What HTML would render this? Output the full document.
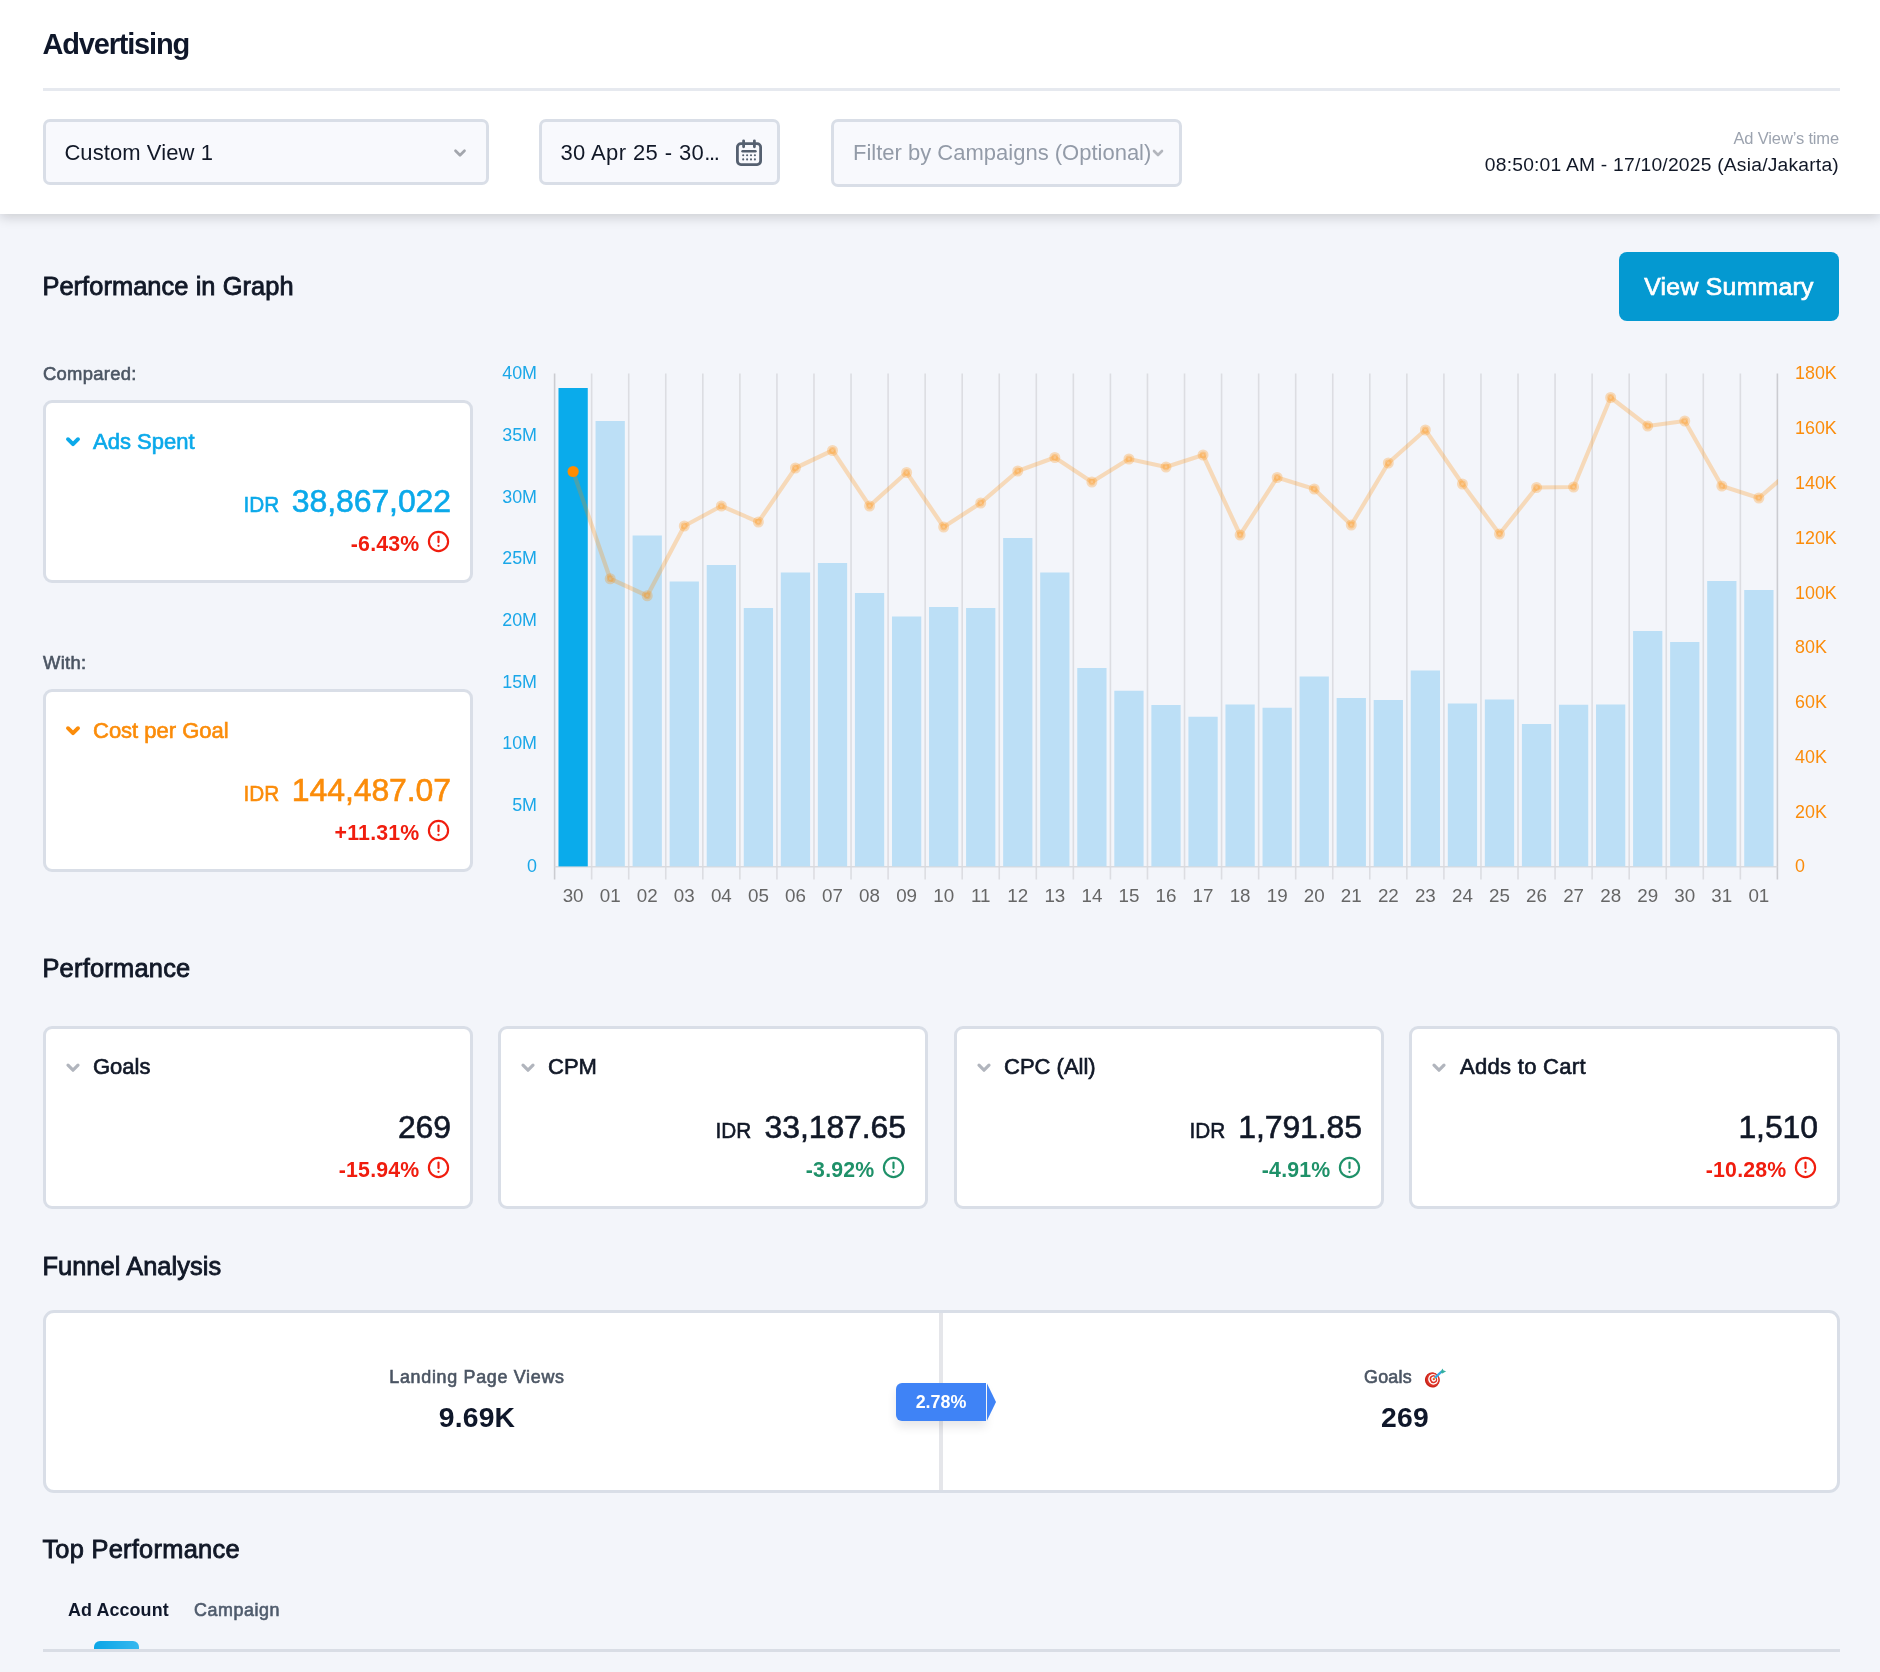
<!DOCTYPE html>
<html>
<head>
<meta charset="utf-8">
<title>Advertising</title>
<style>
*{box-sizing:border-box;margin:0;padding:0}
html,body{width:1880px;height:1672px;overflow:hidden}
body{background:#f3f5fa;font-family:"Liberation Sans",sans-serif;color:#111827;position:relative}
.abs{position:absolute;white-space:nowrap}
.hdr{position:absolute;left:0;top:0;width:1880px;height:214.4px;background:#fff;box-shadow:0 3.5px 11px rgba(10,10,20,.17)}
.title{left:42.6px;top:24.6px;font-size:29px;font-weight:700;line-height:38px;color:#0f172a;letter-spacing:-1.2px}
.hr{position:absolute;left:43px;top:88px;width:1797px;height:3px;background:#e6e9ef}
.inp{position:absolute;background:#f8f9fd;border:3px solid #d9dee7;border-radius:7px}
.inp .t{position:absolute;left:19px;top:1px;font-size:22px;line-height:60px;white-space:nowrap;color:#111827}
.sec{font-size:25.4px;line-height:34px;color:#111827;left:42.4px;-webkit-text-stroke:.85px #111827;letter-spacing:.07px;margin-top:-.4px}
.lbl{font-size:18.4px;line-height:24px;color:#4b5563;left:43px;-webkit-text-stroke:.6px #4b5563;letter-spacing:.3px;margin-top:.6px}
.card{position:absolute;background:#fff;border:3px solid #d9dee7;border-radius:9px;width:430px;height:183px}
.card .ct{position:absolute;left:47px;top:22.6px;font-size:22px;line-height:32px;white-space:nowrap;-webkit-text-stroke:.65px currentColor}
.card.p .ct{top:21.9px}
.card .chev{position:absolute;left:19px;top:33px}
.card .val{position:absolute;right:19px;top:74.4px;line-height:48px;white-space:nowrap;font-size:32px;letter-spacing:-.1px;-webkit-text-stroke:.6px currentColor}
.card .val small{display:inline-block;font-size:22.8px;margin-right:13px;letter-spacing:0;transform:scaleX(.91);transform-origin:100% 50%}
.card .pct{position:absolute;right:50.5px;top:126px;font-size:21.3px;font-weight:700;line-height:30px;white-space:nowrap;letter-spacing:.2px}
.card .ic{position:absolute;right:20px;top:127.2px}
.blue{color:#0ba9ea}
.org{color:#fb8c0a}
.red{color:#f01d0e}
.grn{color:#1f9169}
.chart{position:absolute;left:0;top:340px}
.al{font-size:17.9px;fill:#1aa7e8}
.ar{font-size:17.9px;fill:#fb8c0a}
.ax{font-size:18.8px;fill:#666}
svg text{font-family:"Liberation Sans",sans-serif}
</style>
</head>
<body>
<div id="root" style="position:absolute;left:0;top:0;width:1880px;height:1672px;will-change:transform">

<!-- header -->
<div class="hdr"></div>
<div class="abs title">Advertising</div>
<div class="hr"></div>

<div class="inp" style="left:43px;top:119px;width:446px;height:66px">
  <div class="t" style="left:18.4px;letter-spacing:.08px">Custom View 1</div>
  <svg style="position:absolute;left:406px;top:25px" width="16" height="12" viewBox="0 0 16 12"><path d="M3.5 3.7 L8 8.2 L12.5 3.7" fill="none" stroke="#a3a6ad" stroke-width="2.7" stroke-linecap="round" stroke-linejoin="round"/></svg>
</div>
<div class="inp" style="left:539px;top:119px;width:241px;height:66px">
  <div class="t" style="letter-spacing:.4px;left:18.4px">30 Apr 25 - 30<span style="letter-spacing:-1.3px">...</span></div>
  <svg style="position:absolute;left:193px;top:17px" width="28" height="28" viewBox="0 0 28 28" fill="none" stroke="#556070" stroke-width="2.8" stroke-linecap="round">
    <rect x="2.4" y="4.6" width="23.2" height="21" rx="3.5"/>
    <path d="M8.6 1.8v6M19.4 1.8v6"/>
    <path d="M7.5 12.2h13" stroke-width="2.4"/>
    <g stroke-width="2.1"><path d="M8.2 16.3h.01M12.1 16.3h.01M16 16.3h.01M19.9 16.3h.01M8.2 20.4h.01M12.1 20.4h.01M16 20.4h.01M19.9 20.4h.01"/></g>
  </svg>
</div>
<div class="inp" style="left:831px;top:119px;width:351px;height:68px">
  <div class="t" style="color:#939ba8;line-height:62px;top:.2px">Filter by Campaigns (Optional)</div>
  <svg style="position:absolute;left:315.5px;top:24.5px" width="16" height="12" viewBox="0 0 16 12"><path d="M4 4 L8 8 L12 4" fill="none" stroke="#b3b6bd" stroke-width="2.6" stroke-linecap="round" stroke-linejoin="round"/></svg>
</div>
<div class="abs" style="right:41px;top:127px;font-size:16.5px;line-height:22px;color:#9ca3af;letter-spacing:-.15px">Ad View’s time</div>
<div class="abs" style="right:41px;top:151.5px;font-size:19.25px;line-height:26px;color:#111827;letter-spacing:.22px">08:50:01 AM - 17/10/2025 (Asia/Jakarta)</div>

<!-- performance in graph -->
<div class="abs sec" style="top:269px">Performance in Graph</div>
<div class="abs" style="left:1619px;top:252px;width:220px;height:69px;background:#0499d1;border-radius:8px;color:#fff;font-size:24.75px;line-height:69px;text-align:center;-webkit-text-stroke:.7px #fff;letter-spacing:.3px">View Summary</div>

<div class="abs lbl" style="top:361px">Compared:</div>
<div class="card blue" style="left:43px;top:400px">
  <svg class="chev" width="16" height="12" viewBox="0 0 16 12"><path d="M3 3.2 L8 8.2 L13 3.2" fill="none" stroke="#0ba9ea" stroke-width="3.9" stroke-linecap="round" stroke-linejoin="round"/></svg>
  <div class="ct">Ads Spent</div>
  <div class="val"><small>IDR</small>38,867,022</div>
  <div class="pct red">-6.43%</div>
  <svg class="ic" width="23" height="23" viewBox="0 0 23 23" fill="none" stroke="#f01d0e" stroke-width="2.15" stroke-linecap="round"><circle cx="11.5" cy="11.5" r="9.6"/><path d="M11.5 6.6v5.5"/><path d="M11.5 15.8v.01" stroke-width="2.3"/></svg>
</div>
<div class="abs lbl" style="top:650px">With:</div>
<div class="card org" style="left:43px;top:689px">
  <svg class="chev" width="16" height="12" viewBox="0 0 16 12"><path d="M3 3.2 L8 8.2 L13 3.2" fill="none" stroke="#fb8c0a" stroke-width="3.9" stroke-linecap="round" stroke-linejoin="round"/></svg>
  <div class="ct">Cost per Goal</div>
  <div class="val"><small>IDR</small>144,487.07</div>
  <div class="pct red">+11.31%</div>
  <svg class="ic" width="23" height="23" viewBox="0 0 23 23" fill="none" stroke="#f01d0e" stroke-width="2.15" stroke-linecap="round"><circle cx="11.5" cy="11.5" r="9.6"/><path d="M11.5 6.6v5.5"/><path d="M11.5 15.8v.01" stroke-width="2.3"/></svg>
</div>

<svg class="chart" width="1880" height="600" viewBox="0 340 1880 600">
<defs><clipPath id="cp"><rect x="546.6" y="360" width="1231.4" height="520"/></clipPath></defs>
<line x1="554.60" y1="373.5" x2="554.60" y2="879.5" stroke="#cbccd1" stroke-width="1.6"/>
<line x1="591.65" y1="373.5" x2="591.65" y2="879.5" stroke="#dcdde2" stroke-width="1.6"/>
<line x1="628.71" y1="373.5" x2="628.71" y2="879.5" stroke="#dcdde2" stroke-width="1.6"/>
<line x1="665.76" y1="373.5" x2="665.76" y2="879.5" stroke="#dcdde2" stroke-width="1.6"/>
<line x1="702.82" y1="373.5" x2="702.82" y2="879.5" stroke="#dcdde2" stroke-width="1.6"/>
<line x1="739.87" y1="373.5" x2="739.87" y2="879.5" stroke="#dcdde2" stroke-width="1.6"/>
<line x1="776.93" y1="373.5" x2="776.93" y2="879.5" stroke="#dcdde2" stroke-width="1.6"/>
<line x1="813.98" y1="373.5" x2="813.98" y2="879.5" stroke="#dcdde2" stroke-width="1.6"/>
<line x1="851.04" y1="373.5" x2="851.04" y2="879.5" stroke="#dcdde2" stroke-width="1.6"/>
<line x1="888.09" y1="373.5" x2="888.09" y2="879.5" stroke="#dcdde2" stroke-width="1.6"/>
<line x1="925.15" y1="373.5" x2="925.15" y2="879.5" stroke="#dcdde2" stroke-width="1.6"/>
<line x1="962.20" y1="373.5" x2="962.20" y2="879.5" stroke="#dcdde2" stroke-width="1.6"/>
<line x1="999.25" y1="373.5" x2="999.25" y2="879.5" stroke="#dcdde2" stroke-width="1.6"/>
<line x1="1036.31" y1="373.5" x2="1036.31" y2="879.5" stroke="#dcdde2" stroke-width="1.6"/>
<line x1="1073.36" y1="373.5" x2="1073.36" y2="879.5" stroke="#dcdde2" stroke-width="1.6"/>
<line x1="1110.42" y1="373.5" x2="1110.42" y2="879.5" stroke="#dcdde2" stroke-width="1.6"/>
<line x1="1147.47" y1="373.5" x2="1147.47" y2="879.5" stroke="#dcdde2" stroke-width="1.6"/>
<line x1="1184.53" y1="373.5" x2="1184.53" y2="879.5" stroke="#dcdde2" stroke-width="1.6"/>
<line x1="1221.58" y1="373.5" x2="1221.58" y2="879.5" stroke="#dcdde2" stroke-width="1.6"/>
<line x1="1258.64" y1="373.5" x2="1258.64" y2="879.5" stroke="#dcdde2" stroke-width="1.6"/>
<line x1="1295.69" y1="373.5" x2="1295.69" y2="879.5" stroke="#dcdde2" stroke-width="1.6"/>
<line x1="1332.75" y1="373.5" x2="1332.75" y2="879.5" stroke="#dcdde2" stroke-width="1.6"/>
<line x1="1369.80" y1="373.5" x2="1369.80" y2="879.5" stroke="#dcdde2" stroke-width="1.6"/>
<line x1="1406.85" y1="373.5" x2="1406.85" y2="879.5" stroke="#dcdde2" stroke-width="1.6"/>
<line x1="1443.91" y1="373.5" x2="1443.91" y2="879.5" stroke="#dcdde2" stroke-width="1.6"/>
<line x1="1480.96" y1="373.5" x2="1480.96" y2="879.5" stroke="#dcdde2" stroke-width="1.6"/>
<line x1="1518.02" y1="373.5" x2="1518.02" y2="879.5" stroke="#dcdde2" stroke-width="1.6"/>
<line x1="1555.07" y1="373.5" x2="1555.07" y2="879.5" stroke="#dcdde2" stroke-width="1.6"/>
<line x1="1592.13" y1="373.5" x2="1592.13" y2="879.5" stroke="#dcdde2" stroke-width="1.6"/>
<line x1="1629.18" y1="373.5" x2="1629.18" y2="879.5" stroke="#dcdde2" stroke-width="1.6"/>
<line x1="1666.24" y1="373.5" x2="1666.24" y2="879.5" stroke="#dcdde2" stroke-width="1.6"/>
<line x1="1703.29" y1="373.5" x2="1703.29" y2="879.5" stroke="#dcdde2" stroke-width="1.6"/>
<line x1="1740.35" y1="373.5" x2="1740.35" y2="879.5" stroke="#dcdde2" stroke-width="1.6"/>
<line x1="1777.40" y1="373.5" x2="1777.40" y2="879.5" stroke="#cbccd1" stroke-width="1.6"/>
<line x1="554.6" y1="866.7" x2="1777.4" y2="866.7" stroke="#d9dade" stroke-width="1.5"/>
<rect x="558.49" y="388.00" width="29.27" height="478.40" fill="#0aabeb"/>
<rect x="595.55" y="421.00" width="29.27" height="445.40" fill="#bcdff6"/>
<rect x="632.60" y="535.50" width="29.27" height="330.90" fill="#bcdff6"/>
<rect x="669.65" y="581.50" width="29.27" height="284.90" fill="#bcdff6"/>
<rect x="706.71" y="565.00" width="29.27" height="301.40" fill="#bcdff6"/>
<rect x="743.76" y="608.00" width="29.27" height="258.40" fill="#bcdff6"/>
<rect x="780.82" y="572.50" width="29.27" height="293.90" fill="#bcdff6"/>
<rect x="817.87" y="563.00" width="29.27" height="303.40" fill="#bcdff6"/>
<rect x="854.93" y="593.00" width="29.27" height="273.40" fill="#bcdff6"/>
<rect x="891.98" y="616.50" width="29.27" height="249.90" fill="#bcdff6"/>
<rect x="929.04" y="607.00" width="29.27" height="259.40" fill="#bcdff6"/>
<rect x="966.09" y="608.00" width="29.27" height="258.40" fill="#bcdff6"/>
<rect x="1003.15" y="538.00" width="29.27" height="328.40" fill="#bcdff6"/>
<rect x="1040.20" y="572.50" width="29.27" height="293.90" fill="#bcdff6"/>
<rect x="1077.25" y="668.00" width="29.27" height="198.40" fill="#bcdff6"/>
<rect x="1114.31" y="690.75" width="29.27" height="175.65" fill="#bcdff6"/>
<rect x="1151.36" y="705.00" width="29.27" height="161.40" fill="#bcdff6"/>
<rect x="1188.42" y="716.75" width="29.27" height="149.65" fill="#bcdff6"/>
<rect x="1225.47" y="704.50" width="29.27" height="161.90" fill="#bcdff6"/>
<rect x="1262.53" y="707.75" width="29.27" height="158.65" fill="#bcdff6"/>
<rect x="1299.58" y="676.50" width="29.27" height="189.90" fill="#bcdff6"/>
<rect x="1336.64" y="698.00" width="29.27" height="168.40" fill="#bcdff6"/>
<rect x="1373.69" y="700.00" width="29.27" height="166.40" fill="#bcdff6"/>
<rect x="1410.75" y="670.50" width="29.27" height="195.90" fill="#bcdff6"/>
<rect x="1447.80" y="703.50" width="29.27" height="162.90" fill="#bcdff6"/>
<rect x="1484.85" y="699.50" width="29.27" height="166.90" fill="#bcdff6"/>
<rect x="1521.91" y="724.00" width="29.27" height="142.40" fill="#bcdff6"/>
<rect x="1558.96" y="704.75" width="29.27" height="161.65" fill="#bcdff6"/>
<rect x="1596.02" y="704.50" width="29.27" height="161.90" fill="#bcdff6"/>
<rect x="1633.07" y="631.00" width="29.27" height="235.40" fill="#bcdff6"/>
<rect x="1670.13" y="642.00" width="29.27" height="224.40" fill="#bcdff6"/>
<rect x="1707.18" y="581.00" width="29.27" height="285.40" fill="#bcdff6"/>
<rect x="1744.24" y="590.00" width="29.27" height="276.40" fill="#bcdff6"/>
<g clip-path="url(#cp)">
<polyline points="573.13,471.50 610.18,578.75 647.24,595.75 684.29,526.00 721.35,506.00 758.40,522.00 795.45,468.00 832.51,450.50 869.56,506.00 906.62,472.50 943.67,527.00 980.73,503.00 1017.78,471.00 1054.84,457.50 1091.89,482.00 1128.95,459.00 1166.00,467.00 1203.05,455.00 1240.11,535.00 1277.16,477.50 1314.22,489.00 1351.27,525.00 1388.33,463.00 1425.38,430.00 1462.44,484.00 1499.49,534.00 1536.55,487.50 1573.60,487.00 1610.65,397.50 1647.71,426.00 1684.76,421.00 1721.82,486.00 1758.87,498.00 1795.93,466.00" fill="none" stroke="#ff8c00" stroke-opacity="0.26" stroke-width="4.2" stroke-linejoin="round"/>
<circle cx="573.13" cy="471.50" r="5.6" fill="#ff8c00"/>
<circle cx="610.18" cy="578.75" r="3.44" fill="#ff8c00" fill-opacity="0.26" stroke="#ff8c00" stroke-opacity="0.26" stroke-width="4.1"/>
<circle cx="647.24" cy="595.75" r="3.44" fill="#ff8c00" fill-opacity="0.26" stroke="#ff8c00" stroke-opacity="0.26" stroke-width="4.1"/>
<circle cx="684.29" cy="526.00" r="3.44" fill="#ff8c00" fill-opacity="0.26" stroke="#ff8c00" stroke-opacity="0.26" stroke-width="4.1"/>
<circle cx="721.35" cy="506.00" r="3.44" fill="#ff8c00" fill-opacity="0.26" stroke="#ff8c00" stroke-opacity="0.26" stroke-width="4.1"/>
<circle cx="758.40" cy="522.00" r="3.44" fill="#ff8c00" fill-opacity="0.26" stroke="#ff8c00" stroke-opacity="0.26" stroke-width="4.1"/>
<circle cx="795.45" cy="468.00" r="3.44" fill="#ff8c00" fill-opacity="0.26" stroke="#ff8c00" stroke-opacity="0.26" stroke-width="4.1"/>
<circle cx="832.51" cy="450.50" r="3.44" fill="#ff8c00" fill-opacity="0.26" stroke="#ff8c00" stroke-opacity="0.26" stroke-width="4.1"/>
<circle cx="869.56" cy="506.00" r="3.44" fill="#ff8c00" fill-opacity="0.26" stroke="#ff8c00" stroke-opacity="0.26" stroke-width="4.1"/>
<circle cx="906.62" cy="472.50" r="3.44" fill="#ff8c00" fill-opacity="0.26" stroke="#ff8c00" stroke-opacity="0.26" stroke-width="4.1"/>
<circle cx="943.67" cy="527.00" r="3.44" fill="#ff8c00" fill-opacity="0.26" stroke="#ff8c00" stroke-opacity="0.26" stroke-width="4.1"/>
<circle cx="980.73" cy="503.00" r="3.44" fill="#ff8c00" fill-opacity="0.26" stroke="#ff8c00" stroke-opacity="0.26" stroke-width="4.1"/>
<circle cx="1017.78" cy="471.00" r="3.44" fill="#ff8c00" fill-opacity="0.26" stroke="#ff8c00" stroke-opacity="0.26" stroke-width="4.1"/>
<circle cx="1054.84" cy="457.50" r="3.44" fill="#ff8c00" fill-opacity="0.26" stroke="#ff8c00" stroke-opacity="0.26" stroke-width="4.1"/>
<circle cx="1091.89" cy="482.00" r="3.44" fill="#ff8c00" fill-opacity="0.26" stroke="#ff8c00" stroke-opacity="0.26" stroke-width="4.1"/>
<circle cx="1128.95" cy="459.00" r="3.44" fill="#ff8c00" fill-opacity="0.26" stroke="#ff8c00" stroke-opacity="0.26" stroke-width="4.1"/>
<circle cx="1166.00" cy="467.00" r="3.44" fill="#ff8c00" fill-opacity="0.26" stroke="#ff8c00" stroke-opacity="0.26" stroke-width="4.1"/>
<circle cx="1203.05" cy="455.00" r="3.44" fill="#ff8c00" fill-opacity="0.26" stroke="#ff8c00" stroke-opacity="0.26" stroke-width="4.1"/>
<circle cx="1240.11" cy="535.00" r="3.44" fill="#ff8c00" fill-opacity="0.26" stroke="#ff8c00" stroke-opacity="0.26" stroke-width="4.1"/>
<circle cx="1277.16" cy="477.50" r="3.44" fill="#ff8c00" fill-opacity="0.26" stroke="#ff8c00" stroke-opacity="0.26" stroke-width="4.1"/>
<circle cx="1314.22" cy="489.00" r="3.44" fill="#ff8c00" fill-opacity="0.26" stroke="#ff8c00" stroke-opacity="0.26" stroke-width="4.1"/>
<circle cx="1351.27" cy="525.00" r="3.44" fill="#ff8c00" fill-opacity="0.26" stroke="#ff8c00" stroke-opacity="0.26" stroke-width="4.1"/>
<circle cx="1388.33" cy="463.00" r="3.44" fill="#ff8c00" fill-opacity="0.26" stroke="#ff8c00" stroke-opacity="0.26" stroke-width="4.1"/>
<circle cx="1425.38" cy="430.00" r="3.44" fill="#ff8c00" fill-opacity="0.26" stroke="#ff8c00" stroke-opacity="0.26" stroke-width="4.1"/>
<circle cx="1462.44" cy="484.00" r="3.44" fill="#ff8c00" fill-opacity="0.26" stroke="#ff8c00" stroke-opacity="0.26" stroke-width="4.1"/>
<circle cx="1499.49" cy="534.00" r="3.44" fill="#ff8c00" fill-opacity="0.26" stroke="#ff8c00" stroke-opacity="0.26" stroke-width="4.1"/>
<circle cx="1536.55" cy="487.50" r="3.44" fill="#ff8c00" fill-opacity="0.26" stroke="#ff8c00" stroke-opacity="0.26" stroke-width="4.1"/>
<circle cx="1573.60" cy="487.00" r="3.44" fill="#ff8c00" fill-opacity="0.26" stroke="#ff8c00" stroke-opacity="0.26" stroke-width="4.1"/>
<circle cx="1610.65" cy="397.50" r="3.44" fill="#ff8c00" fill-opacity="0.26" stroke="#ff8c00" stroke-opacity="0.26" stroke-width="4.1"/>
<circle cx="1647.71" cy="426.00" r="3.44" fill="#ff8c00" fill-opacity="0.26" stroke="#ff8c00" stroke-opacity="0.26" stroke-width="4.1"/>
<circle cx="1684.76" cy="421.00" r="3.44" fill="#ff8c00" fill-opacity="0.26" stroke="#ff8c00" stroke-opacity="0.26" stroke-width="4.1"/>
<circle cx="1721.82" cy="486.00" r="3.44" fill="#ff8c00" fill-opacity="0.26" stroke="#ff8c00" stroke-opacity="0.26" stroke-width="4.1"/>
<circle cx="1758.87" cy="498.00" r="3.44" fill="#ff8c00" fill-opacity="0.26" stroke="#ff8c00" stroke-opacity="0.26" stroke-width="4.1"/>
</g>
<text x="537" y="379.4" text-anchor="end" class="al">40M</text>
<text x="537" y="441.0" text-anchor="end" class="al">35M</text>
<text x="537" y="502.6" text-anchor="end" class="al">30M</text>
<text x="537" y="564.2" text-anchor="end" class="al">25M</text>
<text x="537" y="625.9" text-anchor="end" class="al">20M</text>
<text x="537" y="687.5" text-anchor="end" class="al">15M</text>
<text x="537" y="749.1" text-anchor="end" class="al">10M</text>
<text x="537" y="810.7" text-anchor="end" class="al">5M</text>
<text x="537" y="872.3" text-anchor="end" class="al">0</text>
<text x="1795" y="379.4" class="ar">180K</text>
<text x="1795" y="434.2" class="ar">160K</text>
<text x="1795" y="488.9" class="ar">140K</text>
<text x="1795" y="543.7" class="ar">120K</text>
<text x="1795" y="598.5" class="ar">100K</text>
<text x="1795" y="653.2" class="ar">80K</text>
<text x="1795" y="708.0" class="ar">60K</text>
<text x="1795" y="762.8" class="ar">40K</text>
<text x="1795" y="817.5" class="ar">20K</text>
<text x="1795" y="872.3" class="ar">0</text>
<text x="573.13" y="901.6" text-anchor="middle" class="ax">30</text>
<text x="610.18" y="901.6" text-anchor="middle" class="ax">01</text>
<text x="647.24" y="901.6" text-anchor="middle" class="ax">02</text>
<text x="684.29" y="901.6" text-anchor="middle" class="ax">03</text>
<text x="721.35" y="901.6" text-anchor="middle" class="ax">04</text>
<text x="758.40" y="901.6" text-anchor="middle" class="ax">05</text>
<text x="795.45" y="901.6" text-anchor="middle" class="ax">06</text>
<text x="832.51" y="901.6" text-anchor="middle" class="ax">07</text>
<text x="869.56" y="901.6" text-anchor="middle" class="ax">08</text>
<text x="906.62" y="901.6" text-anchor="middle" class="ax">09</text>
<text x="943.67" y="901.6" text-anchor="middle" class="ax">10</text>
<text x="980.73" y="901.6" text-anchor="middle" class="ax">11</text>
<text x="1017.78" y="901.6" text-anchor="middle" class="ax">12</text>
<text x="1054.84" y="901.6" text-anchor="middle" class="ax">13</text>
<text x="1091.89" y="901.6" text-anchor="middle" class="ax">14</text>
<text x="1128.95" y="901.6" text-anchor="middle" class="ax">15</text>
<text x="1166.00" y="901.6" text-anchor="middle" class="ax">16</text>
<text x="1203.05" y="901.6" text-anchor="middle" class="ax">17</text>
<text x="1240.11" y="901.6" text-anchor="middle" class="ax">18</text>
<text x="1277.16" y="901.6" text-anchor="middle" class="ax">19</text>
<text x="1314.22" y="901.6" text-anchor="middle" class="ax">20</text>
<text x="1351.27" y="901.6" text-anchor="middle" class="ax">21</text>
<text x="1388.33" y="901.6" text-anchor="middle" class="ax">22</text>
<text x="1425.38" y="901.6" text-anchor="middle" class="ax">23</text>
<text x="1462.44" y="901.6" text-anchor="middle" class="ax">24</text>
<text x="1499.49" y="901.6" text-anchor="middle" class="ax">25</text>
<text x="1536.55" y="901.6" text-anchor="middle" class="ax">26</text>
<text x="1573.60" y="901.6" text-anchor="middle" class="ax">27</text>
<text x="1610.65" y="901.6" text-anchor="middle" class="ax">28</text>
<text x="1647.71" y="901.6" text-anchor="middle" class="ax">29</text>
<text x="1684.76" y="901.6" text-anchor="middle" class="ax">30</text>
<text x="1721.82" y="901.6" text-anchor="middle" class="ax">31</text>
<text x="1758.87" y="901.6" text-anchor="middle" class="ax">01</text>
</svg>

<!-- performance -->
<div class="abs sec" style="top:951px;letter-spacing:.25px">Performance</div>

<div class="card p" style="left:43px;top:1026px">
  <svg class="chev" width="16" height="12" viewBox="0 0 16 12"><path d="M3 3.2 L8 8.2 L13 3.2" fill="none" stroke="#b1b5bd" stroke-width="3.2" stroke-linecap="round" stroke-linejoin="round"/></svg>
  <div class="ct">Goals</div>
  <div class="val">269</div>
  <div class="pct red">-15.94%</div>
  <svg class="ic" width="23" height="23" viewBox="0 0 23 23" fill="none" stroke="#f01d0e" stroke-width="2.15" stroke-linecap="round"><circle cx="11.5" cy="11.5" r="9.6"/><path d="M11.5 6.6v5.5"/><path d="M11.5 15.8v.01" stroke-width="2.3"/></svg>
</div>
<div class="card p" style="left:498px;top:1026px">
  <svg class="chev" width="16" height="12" viewBox="0 0 16 12"><path d="M3 3.2 L8 8.2 L13 3.2" fill="none" stroke="#b1b5bd" stroke-width="3.2" stroke-linecap="round" stroke-linejoin="round"/></svg>
  <div class="ct">CPM</div>
  <div class="val"><small>IDR</small>33,187.65</div>
  <div class="pct grn">-3.92%</div>
  <svg class="ic" width="23" height="23" viewBox="0 0 23 23" fill="none" stroke="#1f9169" stroke-width="2.15" stroke-linecap="round"><circle cx="11.5" cy="11.5" r="9.6"/><path d="M11.5 6.6v5.5"/><path d="M11.5 15.8v.01" stroke-width="2.3"/></svg>
</div>
<div class="card p" style="left:954px;top:1026px">
  <svg class="chev" width="16" height="12" viewBox="0 0 16 12"><path d="M3 3.2 L8 8.2 L13 3.2" fill="none" stroke="#b1b5bd" stroke-width="3.2" stroke-linecap="round" stroke-linejoin="round"/></svg>
  <div class="ct">CPC (All)</div>
  <div class="val"><small>IDR</small>1,791.85</div>
  <div class="pct grn">-4.91%</div>
  <svg class="ic" width="23" height="23" viewBox="0 0 23 23" fill="none" stroke="#1f9169" stroke-width="2.15" stroke-linecap="round"><circle cx="11.5" cy="11.5" r="9.6"/><path d="M11.5 6.6v5.5"/><path d="M11.5 15.8v.01" stroke-width="2.3"/></svg>
</div>
<div class="card p" style="left:1409px;top:1026px;width:431px">
  <svg class="chev" width="16" height="12" viewBox="0 0 16 12"><path d="M3 3.2 L8 8.2 L13 3.2" fill="none" stroke="#b1b5bd" stroke-width="3.2" stroke-linecap="round" stroke-linejoin="round"/></svg>
  <div class="ct" style="left:48px;letter-spacing:.3px">Adds to Cart</div>
  <div class="val">1,510</div>
  <div class="pct red">-10.28%</div>
  <svg class="ic" width="23" height="23" viewBox="0 0 23 23" fill="none" stroke="#f01d0e" stroke-width="2.15" stroke-linecap="round"><circle cx="11.5" cy="11.5" r="9.6"/><path d="M11.5 6.6v5.5"/><path d="M11.5 15.8v.01" stroke-width="2.3"/></svg>
</div>

<!-- funnel -->
<div class="abs sec" style="top:1249px">Funnel Analysis</div>
<div class="card" style="left:43px;top:1310px;width:1797px;height:183px;border-radius:11px"></div>
<div class="abs" style="left:939px;top:1313px;width:4px;height:177px;background:#e5e6ea"></div>
<div class="abs" style="left:277px;width:400px;text-align:center;top:1365px;font-size:17.9px;line-height:24px;color:#4b5563;-webkit-text-stroke:.6px #4b5563;letter-spacing:.7px">Landing Page Views</div>
<div class="abs" style="left:277px;width:400px;text-align:center;top:1398px;font-size:28.3px;font-weight:700;line-height:38px;color:#0f172a;letter-spacing:.2px">9.69K</div>
<div class="abs" style="left:1364px;top:1364.6px;font-size:17.9px;line-height:24px;color:#4b5563;-webkit-text-stroke:.6px #4b5563;letter-spacing:.25px">Goals</div>
<svg class="abs" style="left:1423px;top:1367px" width="26" height="24" viewBox="0 0 26 24">
  <ellipse cx="9.3" cy="13" rx="7.3" ry="7.6" fill="#c62218" transform="rotate(-20 9.3 13)"/>
  <ellipse cx="9.9" cy="12.5" rx="6.6" ry="7" fill="#dd3327" transform="rotate(-20 9.9 12.5)"/>
  <ellipse cx="10.2" cy="12.3" rx="5" ry="5.4" fill="#fff" transform="rotate(-20 10.2 12.3)"/>
  <ellipse cx="10.4" cy="12.2" rx="3.7" ry="4" fill="#dd3327" transform="rotate(-20 10.4 12.2)"/>
  <ellipse cx="10.6" cy="12.1" rx="2.3" ry="2.5" fill="#fff" transform="rotate(-20 10.6 12.1)"/>
  <ellipse cx="10.8" cy="12" rx="1.1" ry="1.2" fill="#dd3327"/>
  <path d="M11 11.8 L12.8 10" stroke="#e6a23c" stroke-width="1.5" stroke-linecap="round"/>
  <path d="M12.6 10.2 L18.6 4.6" stroke="#3aa9e6" stroke-width="2.3" stroke-linecap="round"/>
  <path d="M17.6 5.4 L19.3 1.4 L20.6 3.4 L23.2 4.2 L19.4 6.6 Z" fill="#35b0a0"/>
</svg>
<div class="abs" style="left:1205px;width:400px;text-align:center;top:1398px;font-size:28.3px;font-weight:700;line-height:38px;color:#0f172a;letter-spacing:.2px">269</div>
<div class="abs" style="left:896px;top:1383px;width:90px;height:38px;background:#3f83f6;border-radius:6px 0 0 6px;box-shadow:0 6px 10px rgba(15,23,42,.10);color:#fff;font-size:17.9px;font-weight:700;line-height:38px;text-align:center">2.78%</div>
<svg class="abs" style="left:987px;top:1383px" width="10" height="38" viewBox="0 0 10 38"><path d="M0 0.5 L9 19 L0 37.5Z" fill="#3f83f6"/></svg>

<!-- top performance -->
<div class="abs sec" style="top:1532px;letter-spacing:.27px">Top Performance</div>
<div class="abs" style="left:68px;top:1598.3px;font-size:17.9px;font-weight:700;line-height:24px;color:#0f172a;letter-spacing:.1px">Ad Account</div>
<div class="abs" style="left:194px;top:1598.3px;font-size:17.9px;line-height:24px;color:#4f5b6c;-webkit-text-stroke:.6px #4f5b6c;letter-spacing:.55px">Campaign</div>
<div class="abs" style="left:43px;top:1649px;width:1797px;height:3px;background:#d9dde5"></div>
<div class="abs" style="left:94px;top:1641px;width:45px;height:8px;border-radius:6px 6px 0 0;background:linear-gradient(90deg,#0aa5e6,#38b8ef)"></div>

</div>
</body>
</html>
